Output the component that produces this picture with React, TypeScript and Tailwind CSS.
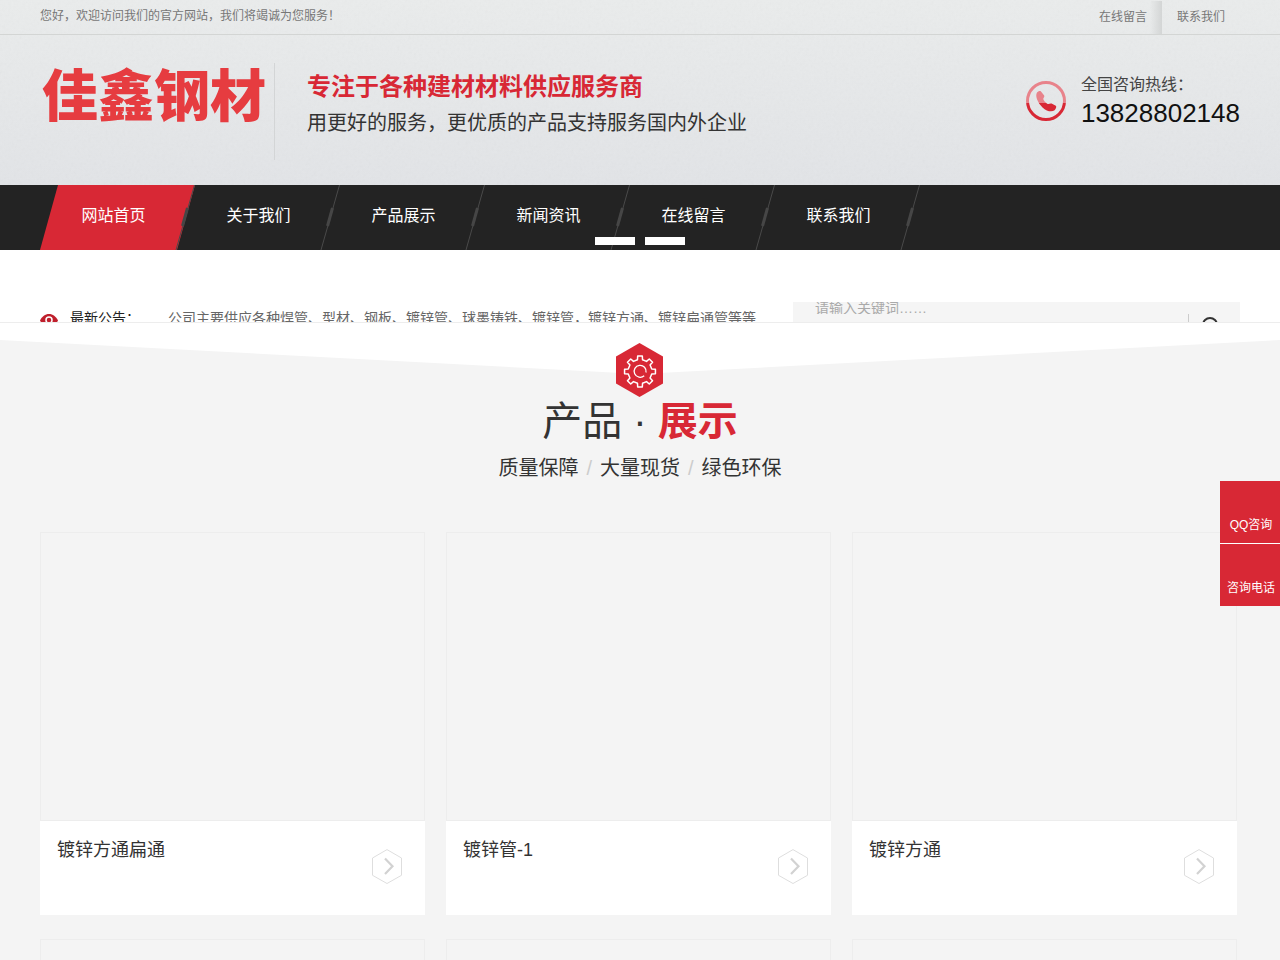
import { useState } from "react";

const NAV = ["网站首页", "关于我们", "产品展示", "新闻资讯", "在线留言", "联系我们"];
const TOP_LINKS = ["在线留言", "联系我们"];
const PRODUCTS = ["镀锌方通扁通", "镀锌管-1", "镀锌方通"];
const FEATURES = ["质量保障", "大量现货", "绿色环保"];
const CONTACTS = ["QQ咨询", "咨询电话"];

function gearPath(teeth: number, outer: number, inner: number) {
  const step = (Math.PI * 2) / teeth;
  const points: string[] = [];
  for (let i = 0; i < teeth; i++) {
    const a = i * step - Math.PI / 2;
    const corners: [number, number][] = [
      [-0.27, inner],
      [-0.19, outer],
      [0.19, outer],
      [0.27, inner],
    ];
    corners.forEach(([offset, r]) => {
      const t = a + offset * step;
      points.push(`${(r * Math.cos(t)).toFixed(2)} ${(r * Math.sin(t)).toFixed(2)}`);
    });
  }
  return `M${points.join("L")}Z`;
}

function PaperTexture() {
  return (
    <svg className="pointer-events-none absolute inset-0 h-full w-full opacity-5" aria-hidden="true">
      <filter id="paper">
        <feTurbulence type="fractalNoise" baseFrequency="0.35" numOctaves="2" />
        <feColorMatrix type="saturate" values="0" />
      </filter>
      <rect width="100%" height="100%" filter="url(#paper)" />
    </svg>
  );
}

function PhoneIcon() {
  return (
    <svg className="mt-1" width="40" height="40" viewBox="0 0 40 40" aria-hidden="true">
      <defs>
        <linearGradient id="phone" x1="0" y1="0" x2="0" y2="40" gradientUnits="userSpaceOnUse">
          <stop offset="0.54" stopColor="#e8838b" />
          <stop offset="0.56" stopColor="#d82835" />
        </linearGradient>
      </defs>
      <circle cx="20" cy="20" r="18.5" fill="none" stroke="url(#phone)" strokeWidth="3" />
      <path
        fill="url(#phone)"
        d="M11 11.500c1-1.200 2.800-2 3.800-1.200l3.400 4.200c.7 1.100-.8 2.200-.9 3.200-.1 1.800 3.500 5.300 5.100 5.300 1 0 1.800-.9 3.200-.4l4.200 2.200c1 .8.2 3.200-1.200 4.400-2.700 2.200-7.900 1.200-12.100-2.800-4.800-4.500-7.700-11.500-5.500-14.900z"
      />
    </svg>
  );
}

function TopBar() {
  return (
    <div className="relative border-b border-[#d3d5d4]">
      <div className="mx-auto flex h-[34px] max-w-[1200px] items-center justify-between text-xs text-[#777]">
        <p className="pb-0.5">您好，欢迎访问我们的官方网站，我们将竭诚为您服务！</p>
        <ul className="flex h-full pt-px">
          {TOP_LINKS.map((label, i) => (
            <li key={label} className="relative flex">
              <a href="#" className="px-[15px] leading-8">{label}</a>
              {i === 0 && (
                <span className="absolute inset-y-0 right-0 w-3 bg-linear-to-r from-transparent to-[#d3d5d5]" />
              )}
            </li>
          ))}
        </ul>
      </div>
    </div>
  );
}

function Header() {
  return (
    <header className="relative bg-linear-to-b from-[#eaecec] to-[#e2e4e7]">
      <PaperTexture />
      <TopBar />
      <div className="relative mx-auto flex h-[150px] max-w-[1200px] items-start justify-between">
        <div className="flex items-start pt-7">
          <a href="#" className="w-[234px] pl-0.5 text-[56px] leading-[68px] font-black text-[#e63c40]">
            佳鑫钢材
          </a>
          <div className="h-[97px] border-l border-[#d3d5d6]" />
          <div className="ml-8 pt-2">
            <h2 className="text-2xl leading-8 font-bold text-[#d82835]">专注于各种建材材料供应服务商</h2>
            <p className="text-xl leading-10 text-[#333]">用更好的服务，更优质的产品支持服务国内外企业</p>
          </div>
        </div>
        <div className="flex items-center gap-[15px] pt-9">
          <PhoneIcon />
          <div>
            <p className="text-base leading-7 text-[#444]">全国咨询热线：</p>
            <p className="text-[26px] leading-7 text-[#111]">13828802148</p>
          </div>
        </div>
      </div>
    </header>
  );
}

function NavBar() {
  const [active, setActive] = useState(0);

  return (
    <nav className="relative bg-[#232323]">
      <ul className="mx-auto flex max-w-[1200px]">
        {NAV.map((label, i) => (
          <li key={label} className="relative w-[145px]">
            <svg className="pointer-events-none absolute top-0 left-0" width="155" height="65" aria-hidden="true">
              {i === active && <path d="M18 0H155L137 65H0Z" fill="#d82835" />}
              <path d="M154.500 0L136 65" stroke="#4a4a4a" />
              <path d="M147.500 23L142.500 41" stroke="#464646" strokeWidth="3" />
            </svg>
            <a
              href="#"
              onClick={() => setActive(i)}
              className="relative block h-[65px] pl-0.5 text-center text-base leading-[62px] text-white"
            >
              {label}
            </a>
          </li>
        ))}
      </ul>
      <div className="absolute inset-x-0 bottom-[5px] flex justify-center gap-2.5">
        <button type="button" aria-label="1" className="h-2 w-10 bg-white" />
        <button type="button" aria-label="2" className="h-2 w-10 bg-white" />
      </div>
    </nav>
  );
}

function NoticeBar() {
  return (
    <div className="h-[72px] overflow-hidden bg-white pt-[52px]">
      <div className="mx-auto flex max-w-[1200px] items-start justify-between text-sm">
        <div className="flex leading-8">
          <svg className="mt-3 mr-3" width="18" height="13" viewBox="0 0 18 13" aria-hidden="true">
            <path d="M0 6.500C2 2.500 5.200 0 9 0s7 2.500 9 6.500C16 10.500 12.800 13 9 13S2 10.500 0 6.500z" fill="#bf1f2c" />
            <circle cx="9" cy="6" r="3" fill="none" stroke="#fff" strokeWidth="1.500" />
          </svg>
          <span className="w-[98px] text-[#222]">最新公告：</span>
          <p className="text-[#666]">公司主要供应各种焊管、型材、钢板、镀锌管、球墨铸铁、镀锌管，镀锌方通、镀锌扁通管等等</p>
        </div>
        <form className="flex h-[50px] w-[447px] bg-[#f5f5f5]" onSubmit={(e) => e.preventDefault()}>
          <input
            type="text"
            aria-label="请输入关键词"
            placeholder="请输入关键词……"
            className="h-3 min-w-0 flex-1 pl-[22px] outline-none placeholder:text-[#aaa]"
          />
          <button type="submit" aria-label="搜索" className="mt-3 h-6 w-[52px] border-l border-[#ccc]">
            <svg className="ml-3" width="20" height="20" viewBox="0 0 20 20" fill="none" stroke="#333" strokeWidth="2" aria-hidden="true">
              <circle cx="9" cy="9" r="7" />
              <path d="M14 14l5 5" />
            </svg>
          </button>
        </form>
      </div>
    </div>
  );
}

function ProductCard({ title }: { title?: string }) {
  return (
    <li>
      <div className="h-[289px] border border-[#ededed]" />
      {title && (
        <a href="#" className="flex h-[94px] items-start justify-between bg-white pr-[23px] pl-[17px]">
          <h3 className="pt-[15px] text-lg leading-7 text-[#333]">{title}</h3>
          <svg className="mt-7" width="30" height="35" viewBox="0 0 30 35" fill="none" aria-hidden="true">
            <path d="M15 .6L29.500 9v17.300L15 34.500.5 26.300V9z" stroke="#dedede" />
            <path d="M13 9.500l7.500 7.700L13 25" stroke="#d2d2d2" strokeWidth="2.200" />
          </svg>
        </a>
      )}
    </li>
  );
}

function Products() {
  return (
    <section className="relative border-t border-[#ededed] bg-[#f4f4f4]">
      <svg className="absolute inset-x-0 top-0 h-[51px] w-full" viewBox="0 0 1280 51" preserveAspectRatio="none" aria-hidden="true">
        <path d="M0 0H1280V17L640 51L0 17Z" fill="#fff" />
      </svg>
      <div className="relative flex flex-col items-center pt-5">
        <svg width="48" height="54" viewBox="0 0 48 54" fill="none" aria-hidden="true">
          <path d="M23.500 0L47 13.500V40.500L23.500 54L0 40.500V13.500z" fill="#d82835" />
          <g transform="translate(24 28.500)" stroke="#fff" strokeWidth="1.500" strokeLinejoin="round">
            <path d={gearPath(8, 15.6, 12)} />
            <path d="M4.200 4.200A6 6 0 1 1 6 1" strokeWidth="1.300" />
          </g>
        </svg>
        <h2 className="text-[40px] leading-12 text-[#333]">
          产品 · <strong className="font-bold text-[#d82835]">展示</strong>
        </h2>
        <p className="text-xl leading-[46px] text-[#333]">
          {FEATURES.map((text, i) => (
            <span key={text}>
              {i > 0 && <i className="mx-2 not-italic text-[#ccc]">/</i>}
              {text}
            </span>
          ))}
        </p>
      </div>
      <ul className="mx-auto mt-[41px] grid max-w-[1200px] grid-cols-3 gap-x-[21px] gap-y-6 pr-[3px]">
        {PRODUCTS.map((title) => (
          <ProductCard key={title} title={title} />
        ))}
        <ProductCard />
        <ProductCard />
        <ProductCard />
      </ul>
    </section>
  );
}

function ContactDock() {
  return (
    <aside className="fixed top-1/2 right-0 mt-px flex w-[60px] flex-col gap-px bg-white">
      {CONTACTS.map((label) => (
        <a
          key={label}
          href="#"
          className="flex h-[62px] items-end justify-center bg-[#d82835] pb-2.5 pl-0.5 text-xs leading-4 whitespace-nowrap text-white"
        >
          {label}
        </a>
      ))}
    </aside>
  );
}

export default function App() {
  return (
    <div className="bg-[#f4f4f4] font-['Liberation_Sans','Noto_Sans_CJK_SC',sans-serif]">
      <Header />
      <NavBar />
      <NoticeBar />
      <Products />
      <ContactDock />
    </div>
  );
}
